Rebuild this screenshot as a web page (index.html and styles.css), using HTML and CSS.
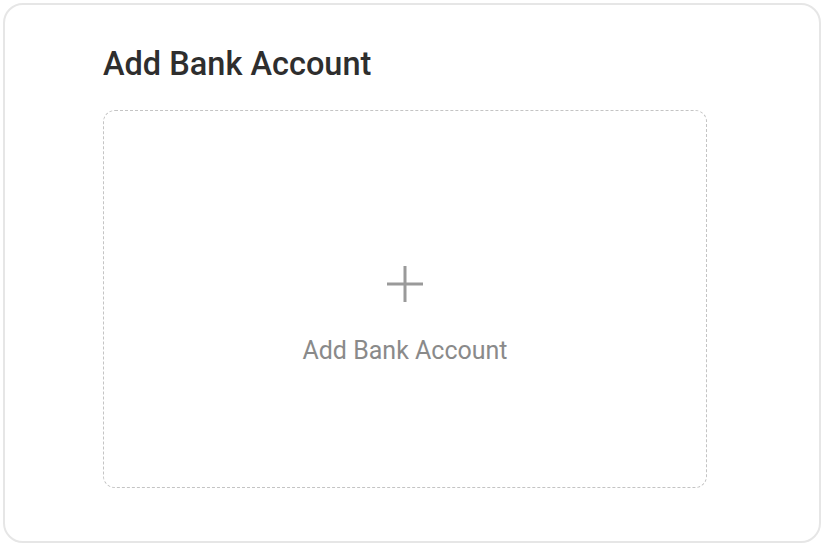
FILE: index.html
```html
<!DOCTYPE html>
<html>
<head>
<meta charset="utf-8">
<link rel="stylesheet" href="styles.css">
</head>
<body>
<div class="card">
  <h2 class="title">Add Bank Account</h2>
  <div class="add-box">
    <svg class="plus" width="38" height="38" viewBox="0 0 38 38"><path d="M19 1V37M1 19H37" stroke="#9a9a9a" stroke-width="3" fill="none"/></svg>
    <div class="add-label">Add Bank Account</div>
  </div>
</div>
</body>
</html>
```
FILE: styles.css
```css
html, body { margin: 0; padding: 0; background: #fff; }
body { padding: 3px; font-family: Roboto, "Liberation Sans", sans-serif; }
.card {
  box-sizing: border-box;
  width: 818px;
  height: 540px;
  border: 2px solid #e6e6e6;
  border-radius: 20px;
  padding: 39px 0 0 98px;
}
.title {
  margin: 0;
  font-size: 32.5px;
  font-weight: 500;
  color: #2e2e2e;
  line-height: 40px;
}
.add-box {
  box-sizing: border-box;
  margin-top: 26px;
  width: 604px;
  height: 378px;
  border: 1px dashed #c4c4c4;
  border-radius: 12px;
  display: flex;
  flex-direction: column;
  align-items: center;
  padding-top: 154px;
}
.plus { display: block; }
.add-label {
  margin-top: 33px;
  font-size: 25px;
  line-height: 29px;
  color: #8a8a8a;
}
```
